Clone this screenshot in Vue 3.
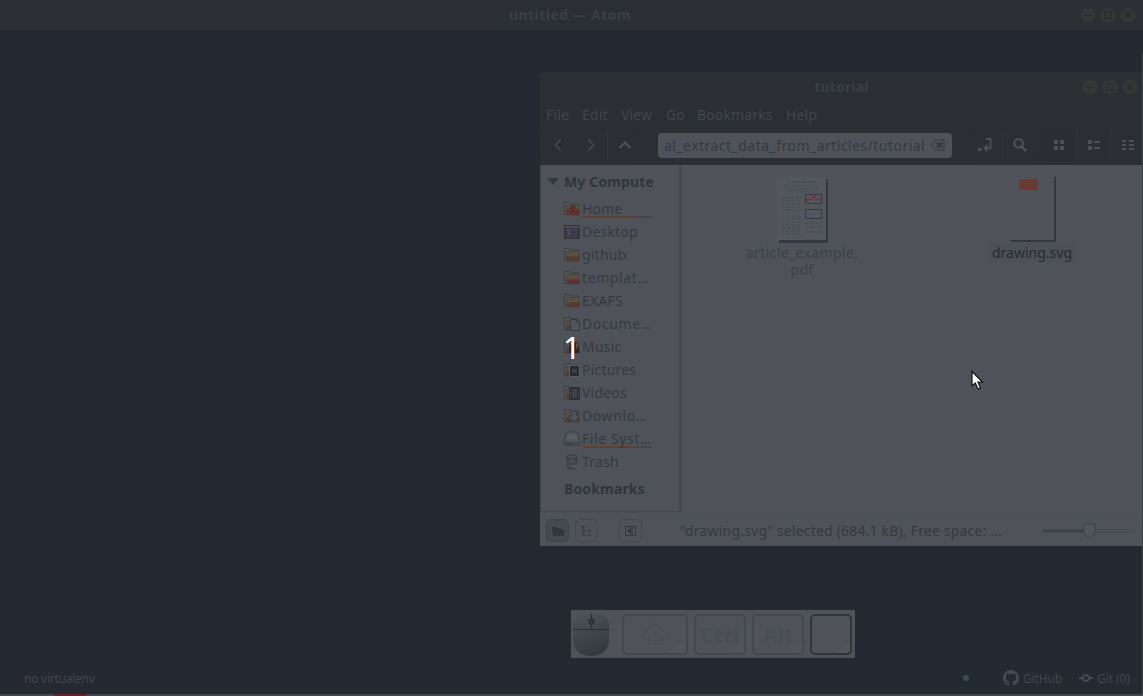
<script setup>
const menus = [
  { t: 'File', w: 36 }, { t: 'Edit', w: 39 }, { t: 'View', w: 45 },
  { t: 'Go', w: 31 }, { t: 'Bookmarks', w: 89 }, { t: 'Help', w: 40 },
]
const places = [
  { t: 'Home', icon: 'home', line: 1 }, { t: 'Desktop', icon: 'desktop' },
  { t: 'github', icon: 'folder' }, { t: 'templat…', icon: 'folder red' },
  { t: 'EXAFS', icon: 'folder' }, { t: 'Docume…', icon: 'doc' },
  { t: 'Music', icon: 'music' }, { t: 'Pictures', icon: 'pic' },
  { t: 'Videos', icon: 'video' }, { t: 'Downlo…', icon: 'down' },
  { t: 'File Syst…', icon: 'disk', line: 1 }, { t: 'Trash', icon: 'trash' },
]
const controls = ['min', 'max', 'close']
const has = (p, k) => p.icon.includes(k)
</script>

<template>
  <div class="screen">
    <header class="atom-bar">
      <h1>untitled — Atom</h1>
      <div class="controls">
        <svg v-for="c in controls" :key="c" width="16" height="16" viewBox="0 0 16 16">
          <circle cx="8" cy="8" r="7.7" fill="#333738" />
          <path v-if="c === 'min'" d="M4 8.5h8" />
          <path v-else-if="c === 'max'" d="M4.5 4.5h7v7h-7z" />
          <path v-else d="M5 5l6 6M11 5l-6 6" />
        </svg>
      </div>
    </header>

    <main class="desk">
      <section class="window">
        <header class="title">
          <h2>tutorial</h2>
          <div class="controls">
            <svg v-for="c in controls" :key="c" width="16" height="16" viewBox="0 0 16 16">
              <circle cx="8" cy="8" r="7.7" fill="#333738" />
              <path v-if="c === 'min'" d="M4 8.5h8" />
              <path v-else-if="c === 'max'" d="M4.5 4.5h7v7h-7z" />
              <path v-else d="M5 5l6 6M11 5l-6 6" />
            </svg>
          </div>
        </header>
        <nav class="menu">
          <span v-for="m in menus" :key="m.t" :style="{ width: m.w + 'px' }">{{ m.t }}</span>
        </nav>
        <div class="toolbar">
          <div class="group nav">
            <button><svg width="16" height="16" viewBox="0 0 16 16"><path d="M10.500 2.500L5.500 8l5 5.500" /></svg></button>
            <button><svg width="16" height="16" viewBox="0 0 16 16"><path d="M5.500 2.500l5 5.500-5 5.500" /></svg></button>
            <button class="div up"><svg width="16" height="16" viewBox="0 0 16 16"><path d="M2.500 11L8 5.500l5.500 5.500" /></svg></button>
          </div>
          <div class="path">
            <span>al_extract_data_from_articles/tutorial</span>
            <svg width="16" height="14" viewBox="0 0 16 14"><path d="M5.500 2h8.500v10H5.500L1.500 7z" /><path d="M7 4.500l5 5m0-5l-5 5" stroke-width="2" /></svg>
          </div>
          <div class="group search">
            <button><svg width="16" height="16" viewBox="0 0 16 16"><path d="M9 2h4.500v9H8M10.500 8L7.500 11l3 3" /><circle cx="2.800" cy="12.500" r="1.900" class="solid" /></svg></button>
            <button class="div"><svg width="16" height="16" viewBox="0 0 16 16"><circle cx="6.500" cy="6.300" r="4.300" /><path class="handle" d="M9.800 9.700l4.500 4.500" /></svg></button>
          </div>
          <div class="group views">
            <button class="on"><svg width="16" height="16" viewBox="0 0 16 16"><path class="solid" d="M3 3h4v4H3zM9 3h4v4H9zM3 9h4v4H3zM9 9h4v4H9z" /></svg></button>
            <button class="div"><svg width="16" height="16" viewBox="0 0 16 16"><path class="solid" d="M2 3h4v4H2zM2 9h4v4H2zM8 4h6v2H8zM8 10h6v2H8z" /></svg></button>
            <button class="div"><svg width="16" height="16" viewBox="0 0 16 16"><path class="solid" d="M2 3h4v2H2zM2 7h4v2H2zM2 11h4v2H2zM9 3h5v2H9zM9 7h5v2H9zM9 11h5v2H9z" /></svg></button>
          </div>
        </div>

        <div class="body">
          <aside class="side">
            <h3><i class="tri"></i><span>My Compute</span></h3>
            <ul>
              <li v-for="p in places" :key="p.t">
                <svg width="16" height="16" viewBox="0 0 16 16">
                  <g v-if="has(p, 'disk')">
                    <path d="M3 1h10l2.500 9v4.500H.5V10z" fill="#555960" stroke="#3c4047" />
                    <path d="M1 10.500h14v4H1z" fill="#454950" /><ellipse cx="8" cy="6" rx="4" ry="2.500" fill="#5b5f65" />
                    <path d="M3 13h5" stroke="#30343c" />
                  </g>
                  <g v-else-if="has(p, 'trash')">
                    <path d="M3 4l1 11h8l1-11z" fill="#43474d" stroke="#3b3f46" />
                    <ellipse cx="8" cy="3" rx="5.500" ry="2" fill="#4b4f56" stroke="#373b42" />
                    <path d="M6 8l2-2 2 3M5 11l3 2 2-2" stroke="#5b5f65" fill="none" /><path d="M10 11h5v3h-5z" fill="#53575e" />
                  </g>
                  <g v-else-if="has(p, 'desktop')">
                    <path d="M.5 1.500h15v13H.5z" fill="#3a3748" stroke="#30343c" />
                    <path d="M1 3h14" stroke="#5c6068" /><path d="M3 5v9M7 5v9M12 5v9" stroke="#65384a" stroke-dasharray="2 1" />
                    <path d="M5 5v9M10 5v9" stroke="#34446a" stroke-width="2" stroke-dasharray="3 1" /><path d="M3 6l3 2-2 2" stroke="#625d68" fill="none" />
                  </g>
                  <g v-else>
                    <path d="M.5 13.500v-12h5l1 1.500h8v10.500z" fill="#555756" stroke="#3a3f45" />
                    <path d="M2.500 14V4.500h12.500V14z" fill="#5a5042" stroke="#46403d" stroke-width=".8" />
                    <path d="M3 9.500h12.500V14H3z" :fill="has(p, 'red') || has(p, 'home') ? '#57332f' : '#523a31'" />
                    <path v-if="has(p, 'folder')" d="M4 10.500h11M5 12.500h10" stroke="#6c3030" stroke-dasharray="1 1" />
                    <path v-if="has(p, 'home')" d="M3.500 9L9 4l5.500 5-1 4h-9z" fill="#5d2a28" />
                    <path v-if="has(p, 'home')" d="M5 9h2m3 0h3M4 12h2m3 0h2" stroke="#66533f" />
                    <g v-if="has(p, 'doc')"><path d="M6.500 3.500h6l3 3v8h-9z" fill="#4f535a" stroke="#353a41" /><path d="M12.500 4v3H15" stroke="#3d4249" fill="none" /></g>
                    <path v-if="has(p, 'music')" d="M5 14V6l7-3v8l3-5v8z" fill="#272729" />
                    <g v-if="has(p, 'pic')"><path d="M5.500 3.500h10v11h-10z" fill="#262b34" stroke="#5b5f66" /><path d="M8 7h5v4H8z" fill="#3b4048" /></g>
                    <g v-if="has(p, 'video')"><path d="M5 2h11v13H5z" fill="#2b2e33" /><path d="M6.500 3v12M14.500 3v12" stroke="#4b4f56" stroke-dasharray="1 1" /><path d="M8 4h5v9H8z" fill="#3e424a" /></g>
                    <path v-if="has(p, 'down')" d="M7.500 3h5v5H16l-6 6-6-6h3.500z" fill="#4d535b" stroke="#393e45" />
                  </g>
                </svg>
                <span :class="{ underlined: p.line, cut: p.t.endsWith('…') }">{{ p.t }}</span>
              </li>
            </ul>
            <h3 class="book"><span>Bookmarks</span></h3>
            <i class="scroll"></i>
          </aside>
          <div class="files">
            <figure class="pdf">
              <svg width="52" height="66" viewBox="0 0 52 66">
                <path d="M3 2h49v64H3z" fill="#343941" /><path d="M1 0h49v63H1z" fill="#53575b" />
                <path d="M12 5h29M8 9h35M10 12h32M10 15h30M5 21h19M6 24h18M5 27h20M7 30h17M5 33h18M6 39h18M5 42h20M6 45h18M5 48h19M6 51h18M5 54h20M6 57h18M29 46h17M29 50h17M29 55h17" stroke="#4b5055" stroke-width="1.500" stroke-dasharray="3 1 5 1" fill="none" />
                <path d="M29.500 17.500h16v9h-16zM29.500 32.500h16v9h-16z" fill="#53575e" stroke="#343a4d" />
                <path d="M30 24l2-2 2 1 2-2 2-3 2 5 2-1 2 1" stroke="#75303b" stroke-width="1.500" fill="none" />
                <path d="M31 38l4-1 4-1 5 1" stroke="#535075" fill="none" stroke-dasharray="2 1" />
              </svg>
              <figcaption>article_example.<br>pdf</figcaption>
            </figure>
            <figure class="drawing">
              <svg width="50" height="66" viewBox="0 0 50 66">
                <path d="M2 63h44V0h2v65H4z" fill="#333840" />
                <path d="M11 2h19v11H11z" fill="#604533" /><path d="M12 3.500h17M13 5.500h16M12 7.500h17M13 9.500h16M12 11.500h17" stroke="#6b2a2a" stroke-dasharray="1 1" />
              </svg>
              <figcaption>drawing.svg</figcaption>
            </figure>
          </div>
        </div>

        <footer class="status">
          <button class="pressed"><svg width="14" height="12" viewBox="0 0 14 12"><path class="solid" d="M1 2h4l1 1h4v2h3v6H2z" /><path class="lines" d="M4 7v4M7 6v5M10 7v4" /></svg></button>
          <button><svg width="14" height="12" viewBox="0 0 14 12"><path d="M1 1.500h4M3 2v8.500h3M3 6h3" /><path d="M7 6h4M7 10h4" /></svg></button>
          <button class="gap"><svg width="14" height="12" viewBox="0 0 14 12"><path d="M1.500 1.500h10v9h-10z" /><path class="solid" d="M3 6l4-3v6zM7.500 2H8.500v8H7.500z" /></svg></button>
          <p>"drawing.svg" selected (684.1 kB), Free space: …</p>
          <svg class="slider" width="98" height="18" viewBox="0 0 98 18">
            <path d="M2 9h42" stroke="#3d4148" stroke-width="3" stroke-linecap="round" />
            <rect x="44" y="7.500" width="50" height="3" rx="1.500" fill="#4c5057" stroke="#464a51" />
            <path d="M44.500 1.500h6q3 0 3 3v6q0 2-6 6-6-4-6-6v-6q0-3 3-3z" fill="#50545b" stroke="#3d4148" />
          </svg>
        </footer>
      </section>

      <section class="keys">
        <svg width="40" height="46" viewBox="0 0 40 46">
          <defs><linearGradient id="mouse" x2=".35" y2="1"><stop stop-color="#505459" /><stop offset="1" stop-color="#353a41" /></linearGradient></defs>
          <path d="M2 12Q3 3 20 2q17 1 18 10v18Q36 45 20 45T2 30z" fill="url(#mouse)" />
          <path d="M2 18.500h36M20.500 3v15" stroke="#292e36" fill="none" /><ellipse cx="20.500" cy="10.500" rx="3" ry="3.500" fill="#2a2f37" /><ellipse cx="20.500" cy="10.500" rx="1" ry="2" fill="#3b3f46" />
        </svg>
        <div class="key shift"><svg width="34" height="24" viewBox="0 0 34 24"><path d="M17 1L2 15h9v7h12v-7h9z" /></svg></div>
        <div class="key">Ctrl</div>
        <div class="key alt">Alt</div>
        <div class="key active"></div>
      </section>

      <b class="count">1</b>
      <svg class="pointer" width="14" height="22" viewBox="0 0 14 22"><path d="M1 1.500v14.500l3.300-3 2.700 6 2.500-1.100-2.600-5.700H11.500z" fill="#fff" stroke="#111" stroke-width="1.200" /></svg>
    </main>

    <footer class="atom-status">
      <span class="env">no virtualenv</span>
      <i class="dot"></i>
      <svg class="hub" width="16" height="16" viewBox="0 0 16 16"><path d="M8 0C3.580 0 0 3.580 0 8c0 3.540 2.290 6.530 5.470 7.590.4.070.55-.17.55-.38 0-.19-.01-.82-.01-1.490-2.010.37-2.530-.49-2.690-.94-.09-.23-.48-.94-.82-1.130-.28-.15-.68-.52-.01-.53.63-.01 1.080.58 1.230.82.72 1.210 1.870.87 2.330.66.07-.52.28-.87.51-1.070-1.780-.2-3.640-.89-3.640-3.950 0-.87.31-1.590.82-2.150-.08-.2-.36-1.020.08-2.120 0 0 .67-.21 2.200.82A7.600 7.600 0 018 3.860c.68 0 1.360.09 2 .27 1.530-1.040 2.200-.82 2.200-.82.44 1.100.16 1.920.08 2.120.51.56.82 1.270.82 2.150 0 3.070-1.870 3.750-3.650 3.950.29.25.54.73.54 1.480 0 1.070-.01 1.930-.01 2.200 0 .21.15.46.55.38A8 8 0 0016 8c0-4.420-3.580-8-8-8z" /></svg>
      <span class="github">GitHub</span>
      <svg class="commit" width="14" height="12" viewBox="0 0 14 12"><circle cx="7" cy="6" r="3" /><path d="M0 6h4M10 6h4" /></svg>
      <span class="git">Git (0)</span>
    </footer>
    <div class="under"><i></i></div>
    <i class="edge"></i>
  </div>
</template>

<style>
body { margin: 0; overflow: hidden; background: #252932; }
</style>

<style scoped>
* { box-sizing: border-box; }
h1, h2, h3, p, ul, figure { margin: 0; padding: 0; }
.screen { position: relative; width: 1143px; height: 696px; display: flex; flex-direction: column; background: #252932; font: 14px/17px "Noto Sans", sans-serif; color: #363a40; overflow: hidden; }
svg { display: block; fill: none; flex: none; }
button { border: 0; padding: 0; background: none; display: flex; align-items: center; justify-content: center; flex: none; }
.atom-bar { height: 30px; background: #2b2f33; display: flex; position: relative; justify-content: center; align-items: center; }
h1, h2 { font-size: 14px; font-weight: 700; color: #3a3e45; line-height: 18px; white-space: nowrap; }
h1 { letter-spacing: .44px; padding-right: 3px; }
.controls { position: absolute; right: 7px; top: 7px; display: flex; gap: 4px; }
.controls path { stroke: #282c2e; stroke-width: 1.200; }
.desk { flex: 1; min-height: 0; position: relative; display: flex; flex-direction: column; }
.window { margin: 42px 0 0 540px; height: 474px; background: #4f5259; border-radius: 6px 0 0 0; overflow: hidden; display: flex; flex-direction: column; flex: none; }
.title { height: 29px; background: #2b2f33; position: relative; display: flex; justify-content: center; align-items: center; }
.title .controls { right: 5px; }
h2 { letter-spacing: .15px; }
.menu { height: 27px; background: #2b2f33; color: #42454a; display: flex; padding: 5px 0 0 6px; }
.menu span { white-space: nowrap; letter-spacing: .15px; }
.toolbar { height: 37px; background: #2b2f33; display: flex; align-items: center; padding-bottom: 3px; }
.group { height: 34px; border: 1px solid #292d34; border-radius: 5px; display: flex; flex: none; }
.group button { width: 34px; height: 32px; }
.group path, .group circle { stroke: #4d5055; stroke-width: 1.800; }
.group circle { stroke-width: 2.200; }
.group .handle { stroke-width: 2.600; }
.nav path { stroke: #44474c; }
.nav .up path { stroke: #4d5055; stroke-width: 2.200; }
.group .solid { fill: #4d5055; stroke: none; }
.group button.div { border-left: 1px solid #33373c; }
.nav { width: 101px; margin-left: 0; }
.group.nav button { width: 33px; }
.group.nav .up { width: 34px; }
.path { width: 294px; height: 25px; margin-left: 17px; border-radius: 4px; background: #4f5259; display: flex; align-items: center; padding-left: 6px; white-space: nowrap; flex: none; }
.path span { width: 266px; font-size: 14px; letter-spacing: .47px; flex: none; }
.path svg path { stroke: #34383f; }
.search { width: 69px; margin-left: 15px; }
.views { width: 106px; margin-left: 5px; border-right: 0; }
.views .on { background: #2a2e33; }
.body { height: 347px; display: flex; }
.side { position: relative; width: 142px; border-left: 1px solid #42464d; border-right: 3px solid #464950; border-bottom: 1px solid #43474e; }
h3 { height: 32px; display: flex; align-items: center; font-size: 14px; color: #32363b; padding: 0 0 0 6px; white-space: nowrap; letter-spacing: .15px; }
.tri { border: 6px solid transparent; border-top: 7px solid #323941; border-bottom: 0; margin-right: 5px; }
ul { list-style: none; }
li { height: 23px; display: flex; align-items: center; padding-left: 23px; white-space: nowrap; }
li svg { margin-right: 2px; }
li span { width: 70px; height: 19px; line-height: 19px; letter-spacing: .2px; }
li .cut { letter-spacing: .6px; }
.underlined { border-bottom: 2px solid #44464a; border-image: linear-gradient(90deg, #60412f 75%, #44464a 75%) 1; }
.book { padding: 0 0 2px 23px; }
.scroll { position: absolute; right: 0; top: 0; width: 4px; height: 267px; border: 1px dotted #494d54; border-top: 0; border-bottom: 0; }
.files { flex: 1; display: flex; }
figcaption { text-align: center; line-height: 17px; white-space: nowrap; }
.pdf { width: 112px; margin: 12px 0 0 64px; display: flex; flex-direction: column; align-items: center; color: #3d4147; }
.pdf figcaption { padding-top: 1px; letter-spacing: .35px; }
.drawing { width: 86px; margin: 12px 0 0 132px; color: #282c32; }
.drawing svg { margin-left: 18px; }
.drawing figcaption { width: 84px; padding: 1px 0; background: #4d5056; border-radius: 3px; }
.status { height: 34px; border-top: 1px dotted #474b52; display: flex; align-items: center; padding: 2px 0 0 6px; }
.status button { width: 23px; height: 23px; border: 1px solid #45494f; border-radius: 5px; margin-right: 6px; }
.status button path { stroke: #34383e; }
.status button .solid { fill: #30343a; stroke: none; }
.status button .lines { stroke: #454950; stroke-width: .6; }
.status .pressed { background: #454950; border-color: #3e4249; }
.status .gap { margin-left: 15px; }
.status p { width: 362px; margin-left: 32px; white-space: nowrap; flex: none; letter-spacing: .19px; }
.keys { width: 284px; height: 48px; margin: 64px 0 0 571px; background: #4f5259; display: flex; align-items: center; flex: none; }
.key { width: 52px; height: 41px; margin-left: 6px; border: 2px solid #45494f; border-radius: 5px; display: flex; align-items: center; justify-content: center; font: 700 22px/24px "Noto Sans", sans-serif; color: #4a4e55; background: linear-gradient(150deg, transparent 84%, #525658 85%); }
.shift { width: 66px; margin-left: 11px; }
.shift path { stroke: #494d54; stroke-width: 1.500; stroke-dasharray: 2 1; }
.active { width: 42px; border-color: #30343b; }
.count { position: absolute; left: 563px; top: 299px; width: 17px; font: 31px/36px "Noto Sans", sans-serif; color: #fff; }
.pointer { position: absolute; left: 971px; top: 340px; }
.atom-status { height: 36px; display: flex; align-items: center; padding: 4px 0 0 24px; font-size: 12px; color: #42464e; white-space: nowrap; flex: none; }
.atom-status svg { margin-top: -1px; }
.env { width: 939px; letter-spacing: -.25px; }
.dot { width: 6px; height: 6px; border-radius: 50%; background: #365443; }
.hub { margin-left: 34px; fill: #454952; }
.github { width: 42px; margin-left: 4px; letter-spacing: -.15px; }
.commit { margin-left: 14px; }
.commit circle, .commit path { stroke: #454952; stroke-width: 2; }
.git { margin-left: 4px; letter-spacing: -.1px; }
.under { height: 2px; background: #45474f; flex: none; }
.under i { display: block; width: 32px; height: 2px; margin-left: 54px; background: #622426; }
.edge { position: absolute; right: 0; top: 53px; width: 1px; height: 641px; background: #3d4148; }
</style>
